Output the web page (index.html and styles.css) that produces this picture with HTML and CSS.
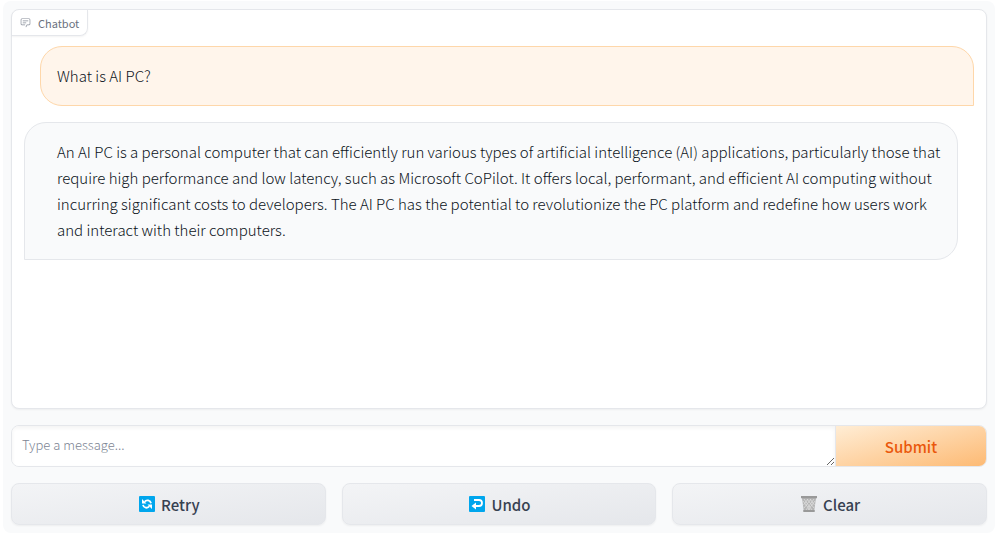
FILE: index.html
```html
<!DOCTYPE html>
<html lang="en">
<head>
<meta charset="utf-8">
<meta name="viewport" content="width=device-width, initial-scale=1">
<title>Chatbot</title>
<link rel="stylesheet" href="styles.css">
</head>
<body>
<main class="panel">
  <section class="chat" aria-labelledby="chat-label">
    <h1 class="chat-label" id="chat-label">
      <svg class="label-icon" viewBox="0 0 32 32" aria-hidden="true">
        <path d="M17.74 30L16 29l4-7h6a2 2 0 0 0 2-2V8a2 2 0 0 0-2-2H6a2 2 0 0 0-2 2v12a2 2 0 0 0 2 2h9v2H6a4 4 0 0 1-4-4V8a4 4 0 0 1 4-4h20a4 4 0 0 1 4 4v12a4 4 0 0 1-4 4h-4.840z"/>
        <path d="M8 10h16v2H8zm0 6h10v2H8z"/>
      </svg>
      Chatbot
    </h1>
    <div class="messages">
      <p class="message user">What is AI PC?</p>
      <p class="message bot">An AI PC is a personal computer that can efficiently run various types of artificial intelligence (AI) applications, particularly those that require high performance and low latency, such as Microsoft CoPilot. It offers local, performant, and efficient AI computing without incurring significant costs to developers. The AI PC has the potential to revolutionize the PC platform and redefine how users work and interact with their computers.</p>
    </div>
  </section>
  <form class="composer">
    <textarea class="input" rows="1" placeholder="Type a message..." aria-label="Message"></textarea>
    <button class="submit" type="button">Submit</button>
  </form>
  <div class="actions">
    <button class="action" type="button">
      <svg class="action-icon" viewBox="0 0 16 16" aria-hidden="true">
        <rect width="16" height="16" rx="1" fill="#00a6ed"/>
        <path d="M5.600 5.800A3.600 3.600 0 0 1 12 7.200M10.400 10.300A3.600 3.600 0 0 1 4 8.800" fill="none" stroke="#fff" stroke-width="1.800"/>
        <path d="M3 3v4.500h4.500zM13 13V8.500H8.500z" fill="#fff"/>
      </svg>
      Retry
    </button>
    <button class="action" type="button">
      <svg class="action-icon" viewBox="0 0 16 16" aria-hidden="true">
        <rect width="16" height="16" rx="1" fill="#00a6ed"/>
        <path d="M5 4h5a3 3 0 0 1 0 6H6" fill="none" stroke="#fff" stroke-width="1.800"/>
        <path d="M2.500 10L7 6.500v7z" fill="#fff"/>
      </svg>
      Undo
    </button>
    <button class="action" type="button">
      <svg class="action-icon" viewBox="0 0 16 16" aria-hidden="true">
        <path d="M1 2h14l-1.800 13H2.800z" fill="#b4b4b4"/>
        <path d="M3 3l8 11M6 3l7 9M9 3l4.500 6M2 5l7 9M13 3L5 14M10 3l-7 9M7 3L2.500 9M14 5l-7 9" fill="none" stroke="#dedede" stroke-width=".8"/>
        <path d="M0 0h16v2.200H0zM2.300 14h11.400v2H2.300z" fill="#999"/>
      </svg>
      Clear
    </button>
  </div>
</main>
</body>
</html>
```
FILE: styles.css
```css
* {
  box-sizing: border-box;
}

body {
  margin: 0;
  background: #fff;
  color: #0b1220;
  font-family: "Noto Sans CJK SC", "Noto Sans", sans-serif;
}

button,
textarea {
  margin: 0;
  font-family: inherit;
}

.panel {
  display: flex;
  flex-direction: column;
  gap: 16px;
  margin: 1px 12px 12px 3px;
  padding: 8px;
  border-radius: 8px;
  background: #f9fafb;
}

.chat {
  min-height: 400px;
  border: 1px solid #e5e7eb;
  border-radius: 8px;
  background: #fff;
  box-shadow: 0 1px 2px rgba(0, 0, 0, 0.05);
}

.chat-label {
  display: flex;
  align-items: center;
  gap: 7px;
  width: fit-content;
  height: 26px;
  margin: 0;
  padding: 0 8px;
  border: 1px solid #e5e7eb;
  border-width: 0 1px 1px 0;
  border-radius: 8px 0 8px 0;
  box-shadow: 0 1px 2px rgba(0, 0, 0, 0.05);
  color: #6b7280;
  font-size: 11px;
  font-weight: 400;
  line-height: 24px;
}

.label-icon {
  width: 11px;
  height: 11px;
  fill: #858c98;
}

.messages {
  display: flex;
  flex-direction: column;
  gap: 16px;
  padding: 10px 12px;
}

.message {
  margin: 0;
  border: 1px solid #e5e7eb;
  border-radius: 22px;
  font-size: 15px;
  font-weight: 300;
  line-height: 26px;
}

.user {
  margin-left: 16px;
  padding: 16px;
  border-color: #fed7aa;
  border-bottom-right-radius: 0;
  background: #fff5eb;
}

.bot {
  margin-right: 16px;
  padding: 16px 16px 16px 32px;
  border-bottom-left-radius: 0;
  background: #f9fafb;
}

.composer {
  display: flex;
  border: 1px solid #e5e7eb;
  border-radius: 8px;
  overflow: hidden;
}

.input {
  flex: 1;
  height: 40px;
  padding: 8px 10px;
  border: 0;
  outline: 0;
  background: #fff;
  box-shadow: inset 0 2px 4px rgba(0, 0, 0, 0.05);
  color: #1f2937;
  font-size: 13px;
  font-weight: 300;
  line-height: 22px;
  resize: vertical;
}

.input::placeholder {
  color: #7d8594;
}

.submit {
  width: 151px;
  padding: 0;
  border: 0;
  border-left: 1px solid #e5e7eb;
  background: linear-gradient(to bottom right, #ffedd5, #fdba74);
  color: #ea580c;
  font-size: 15px;
  font-weight: 500;
}

.actions {
  display: grid;
  grid-template-columns: repeat(3, 1fr);
  gap: 16px;
}

.action {
  display: flex;
  align-items: center;
  justify-content: center;
  gap: 6px;
  height: 42px;
  padding: 0 4px 0 6px;
  border: 1px solid #e5e7eb;
  border-radius: 8px;
  background: linear-gradient(to bottom right, #f3f4f6, #e5e7eb);
  box-shadow: 0 1px 2px rgba(0, 0, 0, 0.05);
  color: #374151;
  font-size: 15px;
  font-weight: 500;
}

.action-icon {
  width: 16px;
  height: 16px;
}
```
